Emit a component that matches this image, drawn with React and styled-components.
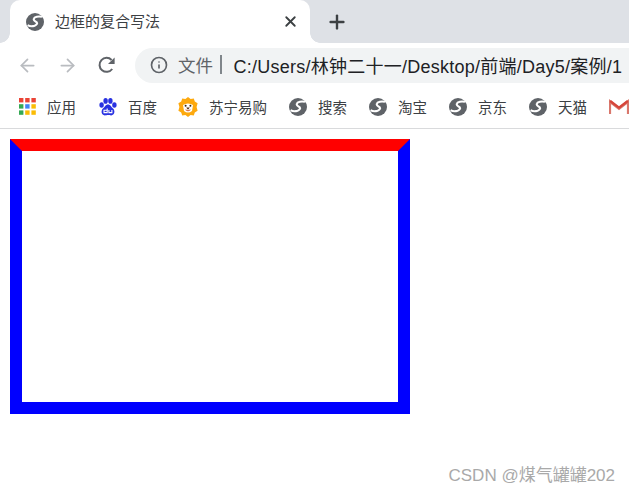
import styled, { createGlobalStyle } from "styled-components";
import { ArrowLeft, ArrowRight, X, Plus, Info } from "lucide-react";

const GlobalStyle = createGlobalStyle`
  html, body {
    margin: 0;
    padding: 0;
    background: #fff;
    overflow: hidden;
  }
  body {
    font-family: "Liberation Sans", "Noto Sans CJK SC", sans-serif;
  }
`;

const Globe = ({ size = 18 }) => (
  <svg width={size} height={size} viewBox="0 0 18 18">
    <circle cx="9" cy="9" r="9" fill="#5f6368" />
    <path
      d="M16 3.8 C12.5 3 8.4 3.6 7.8 5.8 C7.2 7.6 9.6 8.4 10.8 9.4 C11.8 10.4 10.4 12 8.6 12.7 C6.6 13.4 3.8 13.4 1.6 12.2"
      fill="none"
      stroke="#fff"
      strokeWidth="2.1"
    />
  </svg>
);

const ReloadIcon = () => (
  <svg width="20" height="20" viewBox="0 0 20 20">
    <path d="M15.2 14 A7 7 0 1 1 14.6 5" fill="none" stroke="currentColor" strokeWidth="2" />
    <path d="M17.6 2.4 V9 H11 Z" fill="currentColor" />
  </svg>
);

const AppsIcon = () => (
  <svg width="17" height="17" viewBox="0 0 17 17">
    {["#ea4335", "#ea4335", "#ea4335", "#34a853", "#4285f4", "#fbbc05", "#34a853", "#fbbc05", "#fbbc05"].map(
      (c, i) => (
        <rect key={i} x={(i % 3) * 6.2} y={Math.floor(i / 3) * 6.2} width="4.4" height="4.4" fill={c} />
      )
    )}
  </svg>
);

const BaiduIcon = () => (
  <svg width="18" height="18" viewBox="0 0 18 18" fill="#2932e1">
    <ellipse cx="2.6" cy="7" rx="2.2" ry="2.8" />
    <ellipse cx="6.6" cy="2.9" rx="2.2" ry="2.8" />
    <ellipse cx="11.4" cy="2.9" rx="2.2" ry="2.8" />
    <ellipse cx="15.4" cy="7" rx="2.2" ry="2.8" />
    <path d="M9 6.6 C11.6 6.6 12 9 14 10.6 C16.4 12.6 15.6 17.4 12.2 17.4 C10.8 17.4 10 17 9 17 C8 17 7.2 17.4 5.8 17.4 C2.4 17.4 1.6 12.6 4 10.6 C6 9 6.4 6.6 9 6.6 Z" />
    <path d="M8.2 10.4 V14.6 H5 V12.2 H8" fill="none" stroke="#fff" strokeWidth="1.1" />
    <path d="M9.9 12 V14.6 H12.9 V12" fill="none" stroke="#fff" strokeWidth="1.1" />
  </svg>
);

const SuningIcon = () => (
  <svg width="20" height="20" viewBox="0 0 20 20">
    <path
      d="M10 0 L12.6 2 L15.8 1.6 L16.8 4.6 L19.6 6.2 L18.6 10 L19.6 13.8 L16.8 15.4 L15.8 18.4 L12.6 18 L10 20 L7.4 18 L4.2 18.4 L3.2 15.4 L0.4 13.8 L1.4 10 L0.4 6.2 L3.2 4.6 L4.2 1.6 L7.4 2 Z"
      fill="#fda90e"
    />
    <path d="M5 8 Q10 5 15 8 L14 14 Q10 17 6 14 Z" fill="#fff" />
    <circle cx="7.6" cy="8.8" r="1" fill="#3a2a10" />
    <circle cx="12.4" cy="8.8" r="1" fill="#3a2a10" />
    <path d="M8.2 10.6 H11.8 L10 12.8 Z" fill="#5a3010" />
    <path d="M7.6 12.8 Q10 15 12.4 12.8" stroke="#c9501c" strokeWidth="0.9" fill="none" />
  </svg>
);

const GmailIcon = () => (
  <svg width="20" height="16" viewBox="0 0 20 16">
    <path d="M0.8 15 V2.4 L10 9.6 L19.2 2.4 V15" fill="none" stroke="#d9776c" strokeWidth="2.6" />
    <path d="M1.2 2 L10 8.6 L18.8 2" fill="none" stroke="#d6453a" strokeWidth="2.4" />
  </svg>
);

const bookmarks = [
  { icon: <AppsIcon />, label: "应用", width: 80 },
  { icon: <BaiduIcon />, label: "百度", width: 79 },
  { icon: <SuningIcon />, label: "苏宁易购", width: 111 },
  { icon: <Globe />, label: "搜索", width: 80 },
  { icon: <Globe />, label: "淘宝", width: 80 },
  { icon: <Globe />, label: "京东", width: 80 },
  { icon: <Globe />, label: "天猫", width: 80 },
];

const App = () => {
  return (
    <>
      <GlobalStyle />
      <Page>
        <TabStrip>
          <Tab>
            <Globe />
            <TabTitle>边框的复合写法</TabTitle>
            <TabClose>
              <X size={17} strokeWidth={2.6} />
            </TabClose>
          </Tab>
          <NewTab>
            <Plus size={22} strokeWidth={2.6} />
          </NewTab>
        </TabStrip>
        <Toolbar>
          <NavButton $faded>
            <ArrowLeft size={21} strokeWidth={2} />
          </NavButton>
          <NavButton $faded>
            <ArrowRight size={21} strokeWidth={2} />
          </NavButton>
          <NavButton>
            <ReloadIcon />
          </NavButton>
          <Omnibox>
            <Info size={18} strokeWidth={2.2} color="#5f6368" />
            <SecurityLabel>文件</SecurityLabel>
            <Divider />
            <Url>C:/Users/林钟二十一/Desktop/前端/Day5/案例/1</Url>
          </Omnibox>
        </Toolbar>
        <BookmarkBar>
          {bookmarks.map((b) => (
            <Bookmark key={b.label} $width={b.width}>
              <BookmarkIcon>{b.icon}</BookmarkIcon>
              <span>{b.label}</span>
            </Bookmark>
          ))}
          <GmailIcon />
        </BookmarkBar>
        <Content>
          <DemoBox />
        </Content>
        <Watermark>CSDN @煤气罐罐202</Watermark>
      </Page>
    </>
  );
};

export default App;

// st

const Page = styled.div`
  position: relative;
  width: 629px;
  height: 494px;
  overflow: hidden;
  background: #fff;
`;

const TabStrip = styled.div`
  height: 43px;
  background: #dee1e6;
  display: flex;
  align-items: flex-end;
  padding-left: 10px;
`;

const Tab = styled.div`
  position: relative;
  width: 300px;
  height: 43px;
  box-sizing: border-box;
  background: #fff;
  border-radius: 10px 10px 0 0;
  display: flex;
  align-items: center;
  padding: 0 11px 0 16px;

  &::before,
  &::after {
    content: "";
    position: absolute;
    bottom: 0;
    width: 10px;
    height: 10px;
  }
  &::before {
    left: -10px;
    background: radial-gradient(circle at 0 0, #dee1e6 9.5px, #fff 10px);
  }
  &::after {
    right: -10px;
    background: radial-gradient(circle at 100% 0, #dee1e6 9.5px, #fff 10px);
  }
`;

const TabTitle = styled.span`
  flex: 1;
  margin-left: 11px;
  font-size: 15px;
  line-height: 20px;
  color: #3c4043;
`;

const TabClose = styled.span`
  display: flex;
  color: #3c4043;
`;

const NewTab = styled.span`
  display: flex;
  margin: 0 0 10px 16px;
  color: #3c4043;
`;

const Toolbar = styled.div`
  height: 44px;
  background: #fff;
  display: flex;
  align-items: center;
  padding: 0 0 0 17px;
`;

const NavButton = styled.span`
  display: flex;
  width: 40px;
  color: ${(props) => (props.$faded ? "#b9bcc0" : "#5f6368")};
`;

const Omnibox = styled.div`
  flex: 1;
  height: 35px;
  box-sizing: border-box;
  margin: 1px 0 0 -2px;
  padding: 0 0 2px 15px;
  background: #f1f3f4;
  border-radius: 18px 0 0 18px;
  display: flex;
  align-items: center;
  white-space: nowrap;
  overflow: hidden;
`;

const SecurityLabel = styled.span`
  margin-left: 10px;
  font-size: 17.5px;
  color: #5f6368;
`;

const Divider = styled.span`
  width: 1.5px;
  height: 19px;
  margin: 0 12px 0 7px;
  background: #80868b;
`;

const Url = styled.span`
  font-size: 18px;
  letter-spacing: 0.25px;
  color: #202124;
`;

const BookmarkBar = styled.div`
  height: 42px;
  box-sizing: border-box;
  border-bottom: 1px solid #d9dadc;
  display: flex;
  align-items: center;
  padding: 0 0 2px 19px;
`;

const Bookmark = styled.div`
  width: ${(props) => props.$width}px;
  flex: none;
  display: flex;
  align-items: center;
  font-size: 14.5px;
  color: #3c4043;
`;

const BookmarkIcon = styled.span`
  display: flex;
  margin-right: 11px;
`;

const Content = styled.div`
  padding: 10px 0 0 10px;
`;

const DemoBox = styled.div`
  width: 400px;
  height: 275px;
  box-sizing: border-box;
  border: 12px solid #0000ff;
  border-top-color: #ff0000;
`;

const Watermark = styled.div`
  position: absolute;
  right: 14px;
  bottom: 8px;
  font-size: 17px;
  line-height: 20px;
  color: #a9a9a9;
`;
